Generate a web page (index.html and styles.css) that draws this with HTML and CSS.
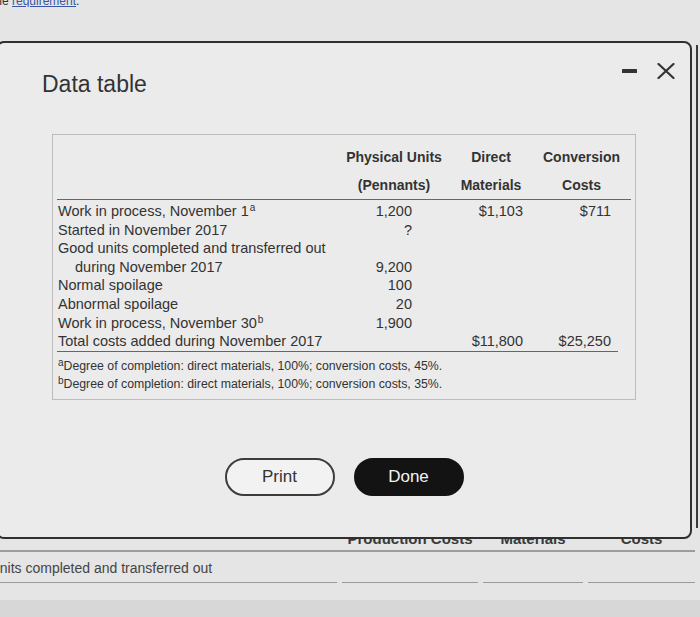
FILE: index.html
```html
<!DOCTYPE html>
<html lang="en">
<head>
<meta charset="utf-8">
<title>Data table</title>
<link rel="stylesheet" href="styles.css">
</head>
<body>
<div class="top-link"><span>the <a href="#">requirement</a>.</span></div>
<div class="panel"></div>
<div class="under">
  <div class="under-head">
    <div></div>
    <div>Production Costs</div>
    <div>Materials</div>
    <div>Costs</div>
  </div>
  <div class="under-row">
    <div class="cell first"><span>units completed and transferred out</span></div>
    <div class="cell"></div>
    <div class="cell"></div>
    <div class="cell"></div>
  </div>
</div>
<div class="band"></div>

<div class="dialog">
  <div class="dlg-head">
    <h1 class="dlg-title">Data table</h1>
    <div class="dlg-controls">
      <svg class="ic-min" width="15" height="4" viewBox="0 0 15 4"><rect x="0" y="0" width="15" height="4" rx="0.5" fill="#333"/></svg>
      <svg class="ic-close" width="18" height="16" viewBox="0 0 18 16"><path d="M1.5 1 L16.5 15 M16.5 1 L1.5 15" stroke="#333" stroke-width="2.2" stroke-linecap="round" fill="none"/></svg>
    </div>
  </div>

  <div class="dt-box">
    <div class="dt-head">
      <div></div><div>Physical Units</div><div>Direct</div><div>Conversion</div>
      <div></div><div>(Pennants)</div><div>Materials</div><div>Costs</div>
    </div>
    <div class="dt-body">
      <div class="lbl">Work in process, November 1<sup>a</sup></div><div class="u">1,200</div><div class="dm">$1,103</div><div class="cc">$711</div>
      <div class="lbl">Started in November 2017</div><div class="u">?</div><div class="dm"></div><div class="cc"></div>
      <div class="lbl">Good units completed and transferred out</div><div class="u"></div><div class="dm"></div><div class="cc"></div>
      <div class="lbl indent">during November 2017</div><div class="u">9,200</div><div class="dm"></div><div class="cc"></div>
      <div class="lbl">Normal spoilage</div><div class="u">100</div><div class="dm"></div><div class="cc"></div>
      <div class="lbl">Abnormal spoilage</div><div class="u">20</div><div class="dm"></div><div class="cc"></div>
      <div class="lbl">Work in process, November 30<sup>b</sup></div><div class="u">1,900</div><div class="dm"></div><div class="cc"></div>
      <div class="lbl">Total costs added during November 2017</div><div class="u"></div><div class="dm">$11,800</div><div class="cc">$25,250</div>
    </div>
    <div class="notes">
      <p><sup>a</sup>Degree of completion: direct materials, 100%; conversion costs, 45%.</p>
      <p><sup>b</sup>Degree of completion: direct materials, 100%; conversion costs, 35%.</p>
    </div>
  </div>

  <div class="dlg-actions">
    <button class="btn btn-print" type="button">Print</button>
    <button class="btn btn-done" type="button">Done</button>
  </div>
</div>
</body>
</html>
```

FILE: styles.css
```css
* { box-sizing: border-box; }
html, body { margin: 0; padding: 0; }
body {
  width: 700px;
  height: 617px;
  overflow: hidden;
  position: relative;
  background: #e5e5e5;
  font-family: "Liberation Sans", Arial, sans-serif;
  color: #333;
}

/* background page */
.top-link {
  height: 7px;
  overflow: hidden;
  font-size: 12px;
  line-height: 12px;
}
.top-link span {
  display: block;
  margin-top: -5px;
  margin-left: -8px;
  color: #333;
}
.top-link a { color: #3b55a6; text-decoration: underline; }

.panel {
  margin-top: 38px;
  height: 483px;
  width: 698px;
  border-right: 2px solid #3a3a3a;
}

.under-head,
.under-row {
  display: grid;
  grid-template-columns: 337px 136px 100px 107px;
  column-gap: 5px;
  width: 695px;
}
.under-head {
  padding: 2px 0;
  border-bottom: 2px solid #9c9c9c;
  font-weight: bold;
  font-size: 15px;
  line-height: 18px;
  text-align: center;
  color: #3a3a3a;
}
.under-row {
  padding-top: 7px;
  align-items: end;
}
.under-row .cell {
  height: 24px;
  border-bottom: 1px solid #9a9a9a;
}
.under-row .first {
  font-size: 14px;
  line-height: 18px;
  color: #444;
  overflow: hidden;
  white-space: nowrap;
}
.under-row .first span { display: block; margin-left: -8px; }

.band {
  margin-top: 17px;
  height: 20px;
  background: #d7d7d7;
}

/* dialog */
.dialog {
  position: absolute;
  top: 41px;
  left: -4px;
  width: 696px;
  height: 498px;
  background: #ebebeb;
  border: 2px solid #303030;
  border-radius: 8px;
}
.dlg-head {
  display: flex;
  align-items: flex-start;
  height: 91px;
  padding: 0 15px 0 44px;
}
.dlg-title {
  flex: 1;
  margin: 27px 0 0;
  font-size: 23px;
  line-height: 28px;
  font-weight: normal;
  color: #333;
}
.dlg-controls {
  display: flex;
  align-items: center;
  gap: 20px;
  margin-top: 20px;
  height: 16px;
}
.ic-min, .ic-close { display: block; }

.dt-box {
  margin-left: 54px;
  width: 584px;
  height: 266px;
  border: 1px solid #bcbcbc;
  padding: 8px 4px 0;
}
.dt-head,
.dt-body {
  display: grid;
  grid-template-columns: 281px 112px 82px 99px;
}
.dt-head {
  font-weight: bold;
  font-size: 14px;
  line-height: 28px;
  text-align: center;
  color: #333;
  border-bottom: 1px solid #666;
}
.dt-body {
  padding-top: 2px;
  font-size: 14.5px;
  line-height: 18.6px;
  color: #333;
}
.dt-body .lbl { padding-left: 1px; white-space: nowrap; }
.dt-body .indent { padding-left: 18px; }
.dt-body .u { text-align: right; padding-right: 38px; }
.dt-body .dm { text-align: right; padding-right: 9px; }
.dt-body .cc { text-align: right; padding-right: 20px; }
.dt-body sup {
  font-size: 10px;
  line-height: 0;
  vertical-align: 5px;
  margin-left: 1px;
}

.notes {
  margin-right: 13px;
  border-top: 1px solid #666;
  padding-top: 5px;
  font-size: 12.3px;
  line-height: 18px;
  color: #333;
}
.notes p { margin: 0; padding-left: 1px; }
.notes sup {
  font-size: 10px;
  line-height: 0;
  vertical-align: 4px;
}

.dlg-actions {
  display: flex;
  justify-content: center;
  gap: 19px;
  margin-top: 58px;
}
.btn {
  width: 110px;
  height: 38px;
  border-radius: 19px;
  font-family: "Liberation Sans", Arial, sans-serif;
  font-size: 17px;
  line-height: 20px;
  padding: 0;
  cursor: pointer;
}
.btn-print {
  background: #f2f2f2;
  border: 2px solid #3c3c3c;
  color: #333;
}
.btn-done {
  background: #131313;
  border: 2px solid #131313;
  color: #f2f2f2;
}
```
